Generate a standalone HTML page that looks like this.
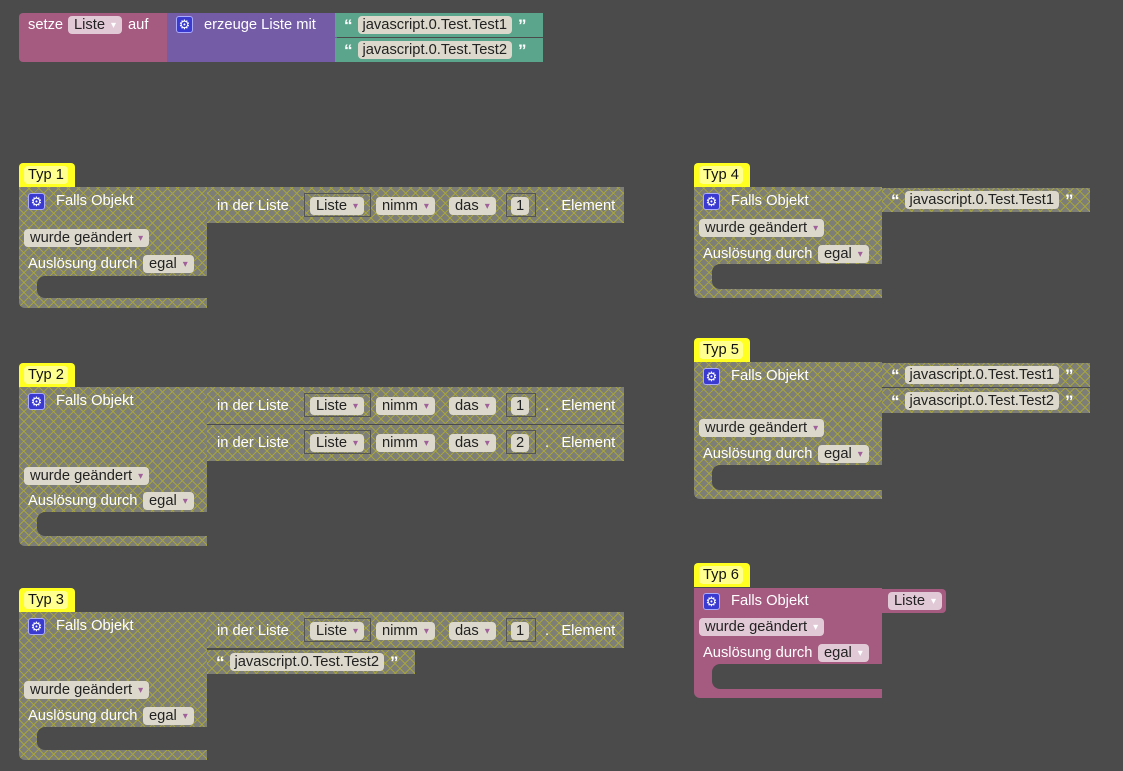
<!DOCTYPE html>
<html><head><meta charset="utf-8"><style>
body{margin:0;width:1123px;height:771px;background:#4b4b4b;position:relative;overflow:hidden;font-family:"Liberation Sans",Arial,sans-serif;font-size:14.7px;color:#fff}
div,span{position:absolute;box-sizing:border-box}
.h{background:repeating-linear-gradient(45deg,#a5a33e 0 1px,transparent 1px 7px),repeating-linear-gradient(-45deg,#a5a33e 0 1px,transparent 1px 7px),#7e7e78;border-radius:4px}
.pk{background:#a55b80;border-radius:4px}
.pu{background:#745ca6}
.gr{background:#5ba58c}
.hole{background:#4b4b4b;border-radius:8px 0 0 8px}
.t{white-space:nowrap;line-height:16px}
.dd{background:#dcd9cc;color:#222;border-radius:4px;height:18px;line-height:18px;padding:0 6px;white-space:nowrap}
.dd:after{content:"▾";color:#a0609a;font-size:10px;margin-left:6px;position:relative;top:-1px}
.pd{background:#e2c9d6}
.pd:after{color:#fff}
.s{display:flex;align-items:center;white-space:nowrap;height:18px}
.s span{position:static}
.str{background:#dcd9cc;color:#222;border-radius:4px;height:18px;line-height:18px;padding:0 5px;margin:0 6px 0 5px}
.q{font-weight:bold;font-size:17px;line-height:18px;height:18px;position:relative!important;top:1px}
.lab{background:#ffff20;border-radius:4px 4px 0 0;width:56px;height:24px}
.lab span{left:5px;top:3px;background:#ffff90;border-radius:4px;padding:0 4px;height:18px;line-height:18px;color:#111}
.g{width:17px;height:17px;background:#3a3ad0;border:1px solid #aaf;border-radius:3px;color:#fff;font-size:13px;line-height:15px;text-align:center}
.box{border:1px solid #555;height:24px}
</style></head><body>

<!-- top -->
<div class="pk" style="left:19px;top:13px;width:150px;height:49px;border-radius:4px 0 0 4px"></div>
<div class="pu" style="left:167px;top:13px;width:170px;height:49px"></div>
<div class="gr" style="left:335px;top:13px;width:208px;height:24px"></div>
<div class="gr" style="left:335px;top:38px;width:208px;height:24px"></div>
<span class="t" style="left:28px;top:17px">setze</span>
<span class="dd pd" style="left:68px;top:16px">Liste</span>
<span class="t" style="left:128px;top:17px">auf</span>
<span class="g" style="left:176px;top:16px">⚙</span>
<span class="t" style="left:204px;top:17px">erzeuge Liste mit</span>
<div class="s" style="left:344px;top:16px"><span class="q">“</span><span class="str">javascript.0.Test.Test1</span><span class="q">”</span></div>
<div class="s" style="left:344px;top:41px"><span class="q">“</span><span class="str">javascript.0.Test.Test2</span><span class="q">”</span></div>

<!-- Typ 1 -->
<div class="lab" style="left:19px;top:163px"><span>Typ 1</span></div>
<div class="h" style="left:19px;top:187px;width:188px;height:121px;border-radius:0 0 0 6px"></div>
<div class="hole" style="left:37px;top:276px;width:170px;height:22px"></div>
<div class="h" style="left:207px;top:187px;width:417px;height:36px;border-radius:0"></div>
<span class="g" style="left:28px;top:193px">⚙</span><span class="t" style="left:56px;top:193px">Falls Objekt</span>
<span class="dd" style="left:24px;top:229px">wurde geändert</span>
<span class="t" style="left:28px;top:256px">Auslösung durch</span><span class="dd" style="left:143px;top:255px">egal</span>
<span class="t" style="left:217px;top:198px">in der Liste</span>
<div class="box" style="left:304px;top:193px;width:67px"></div><span class="dd" style="left:310px;top:197px">Liste</span>
<span class="dd" style="left:376px;top:197px">nimm</span><span class="dd" style="left:449px;top:197px">das</span>
<div class="box" style="left:506px;top:193px;width:30px"></div><span class="str" style="left:511px;top:197px;margin:0">1</span>
<span class="t" style="left:545px;top:198px">.&nbsp;&nbsp; Element</span>

<!-- Typ 2 -->
<div class="lab" style="left:19px;top:363px"><span>Typ 2</span></div>
<div class="h" style="left:19px;top:387px;width:188px;height:159px;border-radius:0 0 0 6px"></div>
<div class="hole" style="left:37px;top:512px;width:170px;height:24px"></div>
<div class="h" style="left:207px;top:387px;width:417px;height:37px;border-radius:0"></div>
<div class="h" style="left:207px;top:425px;width:417px;height:36px;border-radius:0"></div>
<span class="g" style="left:28px;top:393px">⚙</span><span class="t" style="left:56px;top:393px">Falls Objekt</span>
<span class="dd" style="left:24px;top:467px">wurde geändert</span>
<span class="t" style="left:28px;top:493px">Auslösung durch</span><span class="dd" style="left:143px;top:492px">egal</span>
<span class="t" style="left:217px;top:398px">in der Liste</span>
<div class="box" style="left:304px;top:393px;width:67px"></div><span class="dd" style="left:310px;top:397px">Liste</span>
<span class="dd" style="left:376px;top:397px">nimm</span><span class="dd" style="left:449px;top:397px">das</span>
<div class="box" style="left:506px;top:393px;width:30px"></div><span class="str" style="left:511px;top:397px;margin:0">1</span>
<span class="t" style="left:545px;top:398px">.&nbsp;&nbsp; Element</span>
<span class="t" style="left:217px;top:435px">in der Liste</span>
<div class="box" style="left:304px;top:430px;width:67px"></div><span class="dd" style="left:310px;top:434px">Liste</span>
<span class="dd" style="left:376px;top:434px">nimm</span><span class="dd" style="left:449px;top:434px">das</span>
<div class="box" style="left:506px;top:430px;width:30px"></div><span class="str" style="left:511px;top:434px;margin:0">2</span>
<span class="t" style="left:545px;top:435px">.&nbsp;&nbsp; Element</span>

<!-- Typ 3 -->
<div class="lab" style="left:19px;top:588px"><span>Typ 3</span></div>
<div class="h" style="left:19px;top:612px;width:188px;height:148px;border-radius:0 0 0 6px"></div>
<div class="hole" style="left:37px;top:727px;width:170px;height:23px"></div>
<div class="h" style="left:207px;top:612px;width:417px;height:36px;border-radius:0"></div>
<div class="h" style="left:207px;top:650px;width:208px;height:24px;border-radius:0"></div>
<span class="g" style="left:28px;top:618px">⚙</span><span class="t" style="left:56px;top:618px">Falls Objekt</span>
<span class="dd" style="left:24px;top:681px">wurde geändert</span>
<span class="t" style="left:28px;top:708px">Auslösung durch</span><span class="dd" style="left:143px;top:707px">egal</span>
<span class="t" style="left:217px;top:623px">in der Liste</span>
<div class="box" style="left:304px;top:618px;width:67px"></div><span class="dd" style="left:310px;top:622px">Liste</span>
<span class="dd" style="left:376px;top:622px">nimm</span><span class="dd" style="left:449px;top:622px">das</span>
<div class="box" style="left:506px;top:618px;width:30px"></div><span class="str" style="left:511px;top:622px;margin:0">1</span>
<span class="t" style="left:545px;top:623px">.&nbsp;&nbsp; Element</span>
<div class="s" style="left:216px;top:653px"><span class="q">“</span><span class="str">javascript.0.Test.Test2</span><span class="q">”</span></div>

<!-- Typ 4 -->
<div class="lab" style="left:694px;top:163px"><span>Typ 4</span></div>
<div class="h" style="left:694px;top:187px;width:188px;height:111px;border-radius:0 0 0 6px"></div>
<div class="hole" style="left:712px;top:264px;width:170px;height:25px"></div>
<div class="h" style="left:882px;top:188px;width:208px;height:24px;border-radius:0"></div>
<span class="g" style="left:703px;top:193px">⚙</span><span class="t" style="left:731px;top:193px">Falls Objekt</span>
<span class="dd" style="left:699px;top:219px">wurde geändert</span>
<span class="t" style="left:703px;top:246px">Auslösung durch</span><span class="dd" style="left:818px;top:245px">egal</span>
<div class="s" style="left:891px;top:191px"><span class="q">“</span><span class="str">javascript.0.Test.Test1</span><span class="q">”</span></div>

<!-- Typ 5 -->
<div class="lab" style="left:694px;top:338px"><span>Typ 5</span></div>
<div class="h" style="left:694px;top:362px;width:188px;height:137px;border-radius:0 0 0 6px"></div>
<div class="hole" style="left:712px;top:465px;width:170px;height:25px"></div>
<div class="h" style="left:882px;top:363px;width:208px;height:24px;border-radius:0"></div>
<div class="h" style="left:882px;top:388px;width:208px;height:25px;border-radius:0"></div>
<span class="g" style="left:703px;top:368px">⚙</span><span class="t" style="left:731px;top:368px">Falls Objekt</span>
<span class="dd" style="left:699px;top:419px">wurde geändert</span>
<span class="t" style="left:703px;top:446px">Auslösung durch</span><span class="dd" style="left:818px;top:445px">egal</span>
<div class="s" style="left:891px;top:366px"><span class="q">“</span><span class="str">javascript.0.Test.Test1</span><span class="q">”</span></div>
<div class="s" style="left:891px;top:392px"><span class="q">“</span><span class="str">javascript.0.Test.Test2</span><span class="q">”</span></div>

<!-- Typ 6 -->
<div class="lab" style="left:694px;top:563px"><span>Typ 6</span></div>
<div class="pk" style="left:694px;top:588px;width:188px;height:110px;border-radius:0 0 0 6px"></div>
<div class="hole" style="left:712px;top:664px;width:170px;height:25px"></div>
<div class="pk" style="left:882px;top:589px;width:64px;height:24px;border-radius:0 4px 4px 0"></div>
<span class="g" style="left:703px;top:593px">⚙</span><span class="t" style="left:731px;top:593px">Falls Objekt</span>
<span class="dd pd" style="left:699px;top:618px">wurde geändert</span>
<span class="t" style="left:703px;top:645px">Auslösung durch</span><span class="dd pd" style="left:818px;top:644px">egal</span>
<span class="dd pd" style="left:888px;top:592px">Liste</span>

</body></html>
